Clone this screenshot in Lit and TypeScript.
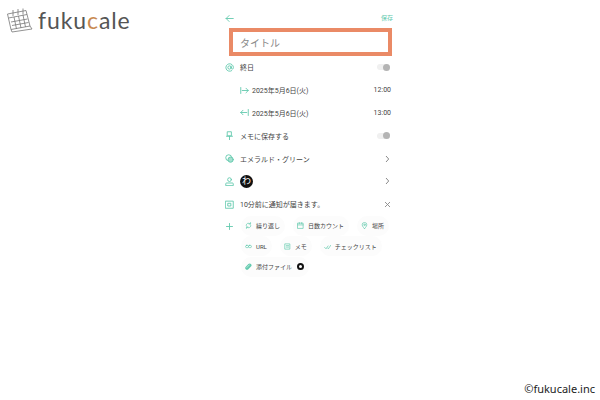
import { LitElement, html, css, svg } from "lit";
import { customElement } from "lit/decorators.js";

const G = "#63caae";
const ic = (body: unknown, w = 9) => html`<svg class="ic" width=${w} height=${w} viewBox="0 0 12 12" fill="none" stroke=${G} stroke-width="1.2" stroke-linecap="round" stroke-linejoin="round">${body}</svg>`;
const chev = html`<svg class="mark" width="7" height="8" viewBox="0 0 7 8" fill="none" stroke="#8a8a8a" stroke-width="1"><path d="M2 1l2.700 3L2 7"/></svg>`;
const cross = html`<svg class="mark" width="7" height="7" viewBox="0 0 7 7" fill="none" stroke="#8a8a8a" stroke-width="0.9"><path d="M1 1l5 5M6 1 1 6"/></svg>`;
const I = {
  back: svg`<path d="M11 6H1.500M5.500 2 1.500 6l4 4"/>`,
  at: svg`<circle cx="6" cy="6" r="2.200"/><path d="M8.200 4v3a1.600 1.600 0 0 0 3 0V6a5 5 0 1 0-2.200 4.200"/>`,
  start: svg`<path d="M1 2v8M3 6h8M8 3l3 3-3 3"/>`,
  end: svg`<path d="M11 2v8M9 6H1M4 3 1 6l3 3"/>`,
  pin: svg`<path d="M3.500 1h5v5.500h-5zM2 7h8M6 7v4.500"/>`,
  palette: svg`<circle cx="5" cy="5" r="4"/><circle cx="7.500" cy="7.500" r="3.500" fill="#a5e0cf"/>`,
  person: svg`<circle cx="6" cy="3.500" r="2.500"/><path d="M1 11V9c0-.6.400-1 1-1h8c.6 0 1 .4 1 1v2z"/>`,
  alarm: svg`<rect x="1" y="1.500" width="10" height="9.500"/><rect x="4.200" y="4.400" width="3.600" height="3.600"/>`,
  plus: svg`<path d="M6 2v8M2 6h8"/>`,
  repeat: svg`<path d="M2 6a4 4 0 0 1 7-2.600M10 6a4 4 0 0 1-7 2.600M9.500 1v2.500H7M2.500 11V8.500H5"/>`,
  cal: svg`<rect x="1.500" y="2" width="9" height="9"/><path d="M1.500 5h9M4 1v2M8 1v2"/>`,
  place: svg`<path d="M6 11.500S2 7.500 2 4.800a4 4 0 0 1 8 0c0 2.700-4 6.700-4 6.700z"/><circle cx="6" cy="4.800" r="1.300"/>`,
  link: svg`<rect x="1" y="4" width="5" height="4" rx="2"/><rect x="6" y="4" width="5" height="4" rx="2"/>`,
  memo: svg`<rect x="2" y="1.500" width="8" height="9"/><path d="M4 4.500h4M4 7h4"/>`,
  check: svg`<path d="M1 7.500 3.500 10 7 5M6 8.500l1.500 1.500L11.500 4"/>`,
  clip: svg`<path d="M3 9.500 9 3.500M2.500 6.500 6.500 2.500a2 2 0 0 1 3 3L5 10a2 2 0 0 1-3-3" stroke-width="2"/>`,
};

@customElement("app-root")
export class AppRoot extends LitElement {
  static styles = css`
    :host { display: block; position: relative; width: 600px; height: 400px; background: #fff; overflow: hidden;
      font-family: Roboto, "Noto Sans CJK JP", sans-serif; color: #444; }
    .logo { position: absolute; left: 6px; top: 7px; display: flex; align-items: center; gap: 5px; }
    .wordmark { font: 400 23px/1 "Lato", sans-serif; letter-spacing: 0.9px; color: #555; }
    .wordmark b { font-weight: 400; color: #c98a50; }
    .copy { position: absolute; right: 5px; bottom: 4px; font: 11px/14px "Noto Sans", sans-serif; color: #222; }
    .col { width: 172px; margin-left: 222px; padding-top: 13px; display: flex; flex-direction: column; }
    .top { display: flex; justify-content: space-between; align-items: center; height: 10px; padding: 0 1px 0 3px; }
    .save { font-size: 6px; line-height: 10px; color: #63caae; }
    .title { box-sizing: border-box; height: 28px; margin: 5px 2px 0 7px; border: 4px solid #ea8a66; font-size: 10px; line-height: 24px;
      padding-left: 7px; color: #888; }
    .row { height: 22.8px; display: flex; align-items: center; font-size: 7px; padding-right: 3px; }
    .iconcell { width: 18px; display: flex; padding-left: 3px; box-sizing: border-box; }
    .iconcell.sub { width: 30px; padding-left: 18px; }
    .grow { flex: 1; }
    .mark { display: block; margin-right: 0; }
    .toggle { position: relative; width: 13px; height: 6px; border-radius: 3px; background: #f0f0f0; margin-right: 1px; }
    .knob { position: absolute; right: 0; top: -0.5px; width: 7px; height: 7px; border-radius: 50%; background: #b4b4b4; }
    .avatar { display: block; width: 13px; height: 13px; border-radius: 50%; background: #111; color: #fff; font-size: 9px; line-height: 13px; text-align: center; }
    .chipsrow { display: flex; }
    .chipsrow .iconcell { padding-top: 6px; }
    .chips { flex: 1; display: flex; flex-wrap: wrap; gap: 0.5px 8px; padding-left: 1px; }
    .chip { height: 20px; display: flex; align-items: center; gap: 4px; padding: 0 5px 0 4px; border-radius: 10px; font-size: 6px; background: #fcfcfc; }
    .dot { width: 7px; height: 7px; border: 2px solid #111; border-radius: 50%; box-sizing: border-box; background: #fff; margin-left: 1px; }
  `;

  private toggle() { return html`<span class="toggle"><span class="knob"></span></span>`; }
  private chip(icon: unknown, label: string, extra: unknown = "") {
    return html`<span class="chip">${ic(icon, 7)}<span>${label}</span>${extra}</span>`;
  }

  render() {
    return html`
      <div class="logo">
        <svg width="27" height="26" viewBox="0 0 27 26" fill="none" stroke="#777" stroke-width="0.8" stroke-linejoin="round">
          <path d="M1.500 7 20 3.500l4 15.500-19 3.500z"/>
          <path d="M2.500 11 21 7.500M5 15l16.500-3M6 18.500l16.500-3M8 10l2.500 12M12.500 9l2.500 12M17 8l2.500 12"/>
          <path d="M7 3v6M12 2v6M17 1.500v6"/>
          <path d="M24 19l2 3-20 3-1-2.500"/>
        </svg>
        <span class="wordmark">fuku<b>c</b>ale</span>
      </div>
      <div class="col">
        <div class="top">${ic(I.back)}<span class="save">保存</span></div>
        <div class="title">タイトル</div>
        <div class="row"><span class="iconcell">${ic(I.at)}</span><span class="grow">終日</span>${this.toggle()}</div>
        <div class="row"><span class="iconcell sub">${ic(I.start)}</span><span class="grow">2025年5月6日(火)</span><span>12:00</span></div>
        <div class="row"><span class="iconcell sub">${ic(I.end)}</span><span class="grow">2025年5月6日(火)</span><span>13:00</span></div>
        <div class="row"><span class="iconcell">${ic(I.pin)}</span><span class="grow">メモに保存する</span>${this.toggle()}</div>
        <div class="row"><span class="iconcell">${ic(I.palette)}</span><span class="grow">エメラルド・グリーン</span>${chev}</div>
        <div class="row"><span class="iconcell">${ic(I.person)}</span><span class="grow"><span class="avatar">わ</span></span>${chev}</div>
        <div class="row"><span class="iconcell">${ic(I.alarm)}</span><span class="grow">10分前に通知が届きます。</span>${cross}</div>
        <div class="chipsrow">
          <span class="iconcell">${ic(I.plus)}</span>
          <div class="chips">
            ${this.chip(I.repeat, "繰り返し")}${this.chip(I.cal, "日数カウント")}${this.chip(I.place, "場所")}
            ${this.chip(I.link, "URL")}${this.chip(I.memo, "メモ")}${this.chip(I.check, "チェックリスト")}
            ${this.chip(I.clip, "添付ファイル", html`<span class="dot"></span>`)}
          </div>
        </div>
      </div>
      <div class="copy">©fukucale.inc</div>
    `;
  }
}
